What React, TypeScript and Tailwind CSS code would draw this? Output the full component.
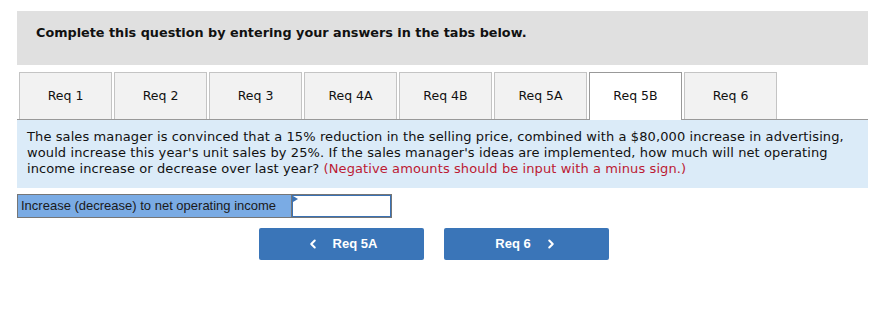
import { ChevronLeft, ChevronRight } from "lucide-react";

const tabs = ["Req 1", "Req 2", "Req 3", "Req 4A", "Req 4B", "Req 5A", "Req 5B", "Req 6"];
const active = "Req 5B";

export default function App() {
  return (
    <div className="w-[885px] h-[313px] bg-white pl-[17px] pt-[11px]" style={{ fontFamily: '"DejaVu Sans", Verdana, sans-serif' }}>
      <div className="w-[851px]">
        {/* Instruction header */}
        <div className="h-[54px] bg-[#e0e0e0] pl-[19px] pt-[14px]">
          <p className="text-[12.8px] font-bold text-[#111] leading-4">
            Complete this question by entering your answers in the tabs below.
          </p>
        </div>

        {/* Tabs */}
        <div className="mt-[7px] flex gap-[2px] pl-[2px] border-b border-[#999]">
          {tabs.map((t) => (
            <div
              key={t}
              className={
                t === active
                  ? "w-[93px] h-[48px] -mb-px pb-px bg-white border border-b-0 border-[#999] flex items-center justify-center text-[12.5px] text-[#111]"
                  : "w-[93px] h-[47px] bg-[#f2f2f2] border border-b-0 border-[#c4c4c4] flex items-center justify-center text-[12.5px] text-[#111]"
              }
            >
              {t}
            </div>
          ))}
        </div>

        {/* Question text */}
        <div className="bg-[#dbebf8] pl-[10px] pr-2 pt-[9px] h-[68px] text-[13px] tracking-[0.1px] leading-4 text-[#111] whitespace-nowrap">
          The sales manager is convinced that a 15% reduction in the selling price, combined with a $80,000 increase in advertising,
          <br />
          would increase this year's unit sales by 25%. If the sales manager's ideas are implemented, how much will net operating
          <br />
          income increase or decrease over last year? <span className="text-[#bc1a33]">(Negative amounts should be input with a minus sign.)</span>
        </div>

        {/* Answer row */}
        <div className="mt-[6px] flex w-[375px] h-[24px] border border-[#767676]" style={{ fontFamily: '"Liberation Sans", Arial, sans-serif' }}>
          <div className="w-[274px] bg-[#7aabe4] text-[13px] text-[#1a1a1a] pl-[3px] flex items-center border-r border-[#767676]">
            Increase (decrease) to net operating income
          </div>
          <div className="relative flex-1 bg-white border border-[#3b72b4]">
            <div className="absolute top-0 left-0 w-0 h-0 border-y-[3px] border-y-transparent border-l-[5px] border-l-[#3b72b4]" />
          </div>
        </div>

        {/* Navigation */}
        <div className="mt-[10px] flex gap-[20px] pl-[242px]" style={{ fontFamily: '"Liberation Sans", Arial, sans-serif' }}>
          <button className="w-[165px] h-[32px] rounded-[2px] bg-[#3a75b8] text-white text-[13px] font-bold flex items-center justify-center gap-[13px]">
            <ChevronLeft size={14} strokeWidth={3.5} />
            <span>Req 5A</span>
          </button>
          <button className="w-[165px] h-[32px] rounded-[2px] bg-[#3a75b8] text-white text-[13px] font-bold flex items-center justify-center gap-[13px]">
            <span>Req 6</span>
            <ChevronRight size={14} strokeWidth={3.5} />
          </button>
        </div>
      </div>
    </div>
  );
}
